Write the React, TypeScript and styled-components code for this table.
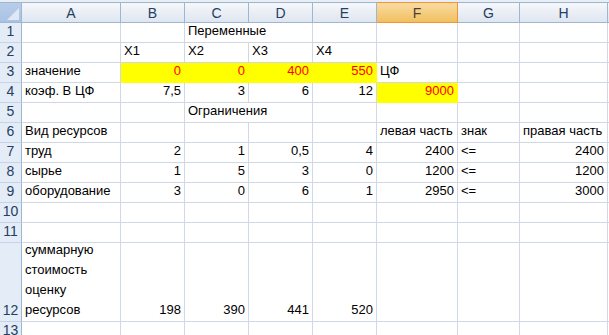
import styled, { createGlobalStyle, css } from "styled-components"

const Global = createGlobalStyle`
  html, body {
    margin: 0;
    padding: 0;
    background: #fff;
    overflow: hidden;
  }
`

const grid = "#d0d7e5"
const headLine = "#9eb6ce"
const font = `"Liberation Sans", Arial, sans-serif`

const Sheet = styled.div`
  display: grid;
  grid-template-columns: 22px 99px 64px 64px 64px 64px 81px 62px 88px 1fr;
  grid-template-rows: 21px repeat(11, 20px) 79px 20px;
  padding-top: 2px;
  background: #e9eef5;
  font-family: ${font};
  font-size: 13px;
  color: #000;
  width: 609px;
  height: 335px;
  overflow: hidden;
`

const Corner = styled.div`
  box-sizing: border-box;
  position: relative;
  background: linear-gradient(#b8cde9, #a9c2e4);
  border-top: 1px solid ${headLine};
  border-right: 1px solid ${headLine};
  border-bottom: 1px solid ${headLine};
`

const CornerMark = styled.svg`
  position: absolute;
  right: 2px;
  bottom: 2px;
`

const ColHead = styled.div<{ $active?: boolean }>`
  box-sizing: border-box;
  display: flex;
  align-items: center;
  justify-content: center;
  font-size: 14px;
  color: #243f60;
  background: linear-gradient(#f5f7fb, #dfe6f0);
  border-top: 1px solid ${headLine};
  border-right: 1px solid ${headLine};
  border-bottom: 1px solid ${headLine};
  ${(p) =>
    p.$active &&
    css`
      background: linear-gradient(#f9dba3, #f1c05f);
      border: 1px solid #f29436;
      border-left: none;
      color: #4b4034;
    `}
`

const RowHead = styled.div`
  box-sizing: border-box;
  display: flex;
  align-items: flex-end;
  justify-content: center;
  padding-bottom: 2px;
  background: #e4ecf7;
  color: #243f60;
  font-size: 14px;
  border-right: 1px solid ${headLine};
  border-bottom: 1px solid #c5d3e6;
  line-height: 18px;
`

const Cell = styled.div<{
  $right?: boolean
  $fill?: boolean
  $red?: boolean
  $span?: number
}>`
  box-sizing: border-box;
  display: flex;
  flex-direction: column;
  justify-content: flex-end;
  align-items: ${(p) => (p.$right ? "flex-end" : "flex-start")};
  padding: 0 3px 1px 3px;
  background: ${(p) => (p.$fill ? "#ffff00" : "#fff")};
  color: ${(p) => (p.$red ? "#ff0000" : "#000")};
  border-right: 1px solid ${(p) => (p.$fill ? "#ffff00" : grid)};
  border-bottom: 1px solid ${(p) => (p.$fill ? "#ffff00" : grid)};
  grid-column: span ${(p) => p.$span ?? 1};
  white-space: nowrap;
  line-height: 20px;
`

type C = {
  t?: string
  r?: boolean
  fill?: boolean
  red?: boolean
  span?: number
}

const cols = ["A", "B", "C", "D", "E", "F", "G", "H"]

const n = (t: string): C => ({ t, r: true })
const y = (t: string): C => ({ t, r: true, fill: true, red: true })
const s = (t: string): C => ({ t })
const e: C = {}

const rows: C[][] = [
  [e, e, { t: "Переменные", span: 2 }, e, e, e, e],
  [e, s("X1"), s("X2"), s("X3"), s("X4"), e, e, e],
  [s("значение"), y("0"), y("0"), y("400"), y("550"), s("ЦФ"), e, e],
  [s("коэф. В ЦФ"), n("7,5"), n("3"), n("6"), n("12"), y("9000"), e, e],
  [e, e, { t: "Ограничения", span: 2 }, e, e, e, e],
  [s("Вид ресурсов"), e, e, e, e, s("левая часть"), s("знак"), s("правая часть")],
  [s("труд"), n("2"), n("1"), n("0,5"), n("4"), n("2400"), s("<="), n("2400")],
  [s("сырье"), n("1"), n("5"), n("3"), n("0"), n("1200"), s("<="), n("1200")],
  [s("оборудование"), n("3"), n("0"), n("6"), n("1"), n("2950"), s("<="), n("3000")],
  [e, e, e, e, e, e, e, e],
  [e, e, e, e, e, e, e, e],
  [e, n("198"), n("390"), n("441"), n("520"), e, e, e],
  [e, e, e, e, e, e, e, e],
]

// A12 is the one wrapped cell
const resources = ["суммарную", "стоимость", "оценку", "ресурсов"]

export default function App() {
  return (
    <>
      <Global />
      <Sheet>
        <Corner>
          <CornerMark width="12" height="12" viewBox="0 0 12 12">
            <polygon points="12,0 12,12 0,12" fill="#dfe8f4" />
          </CornerMark>
        </Corner>
        {cols.map((c) => (
          <ColHead key={c} $active={c === "F"}>
            {c}
          </ColHead>
        ))}
        <ColHead />

        {rows.map((row, i) => (
          <Row key={i} index={i} cells={row} />
        ))}
      </Sheet>
    </>
  )
}

function Row({ index, cells }: { index: number; cells: C[] }) {
  return (
    <>
      <RowHead>{index + 1}</RowHead>
      {cells.map((c, j) =>
        index === 11 && j === 0 ? (
          <Cell key={j}>
            {resources.map((w) => (
              <span key={w}>{w}</span>
            ))}
          </Cell>
        ) : (
          <Cell key={j} $right={c.r} $fill={c.fill} $red={c.red} $span={c.span}>
            {c.t}
          </Cell>
        )
      )}
      <Cell />
    </>
  )
}
